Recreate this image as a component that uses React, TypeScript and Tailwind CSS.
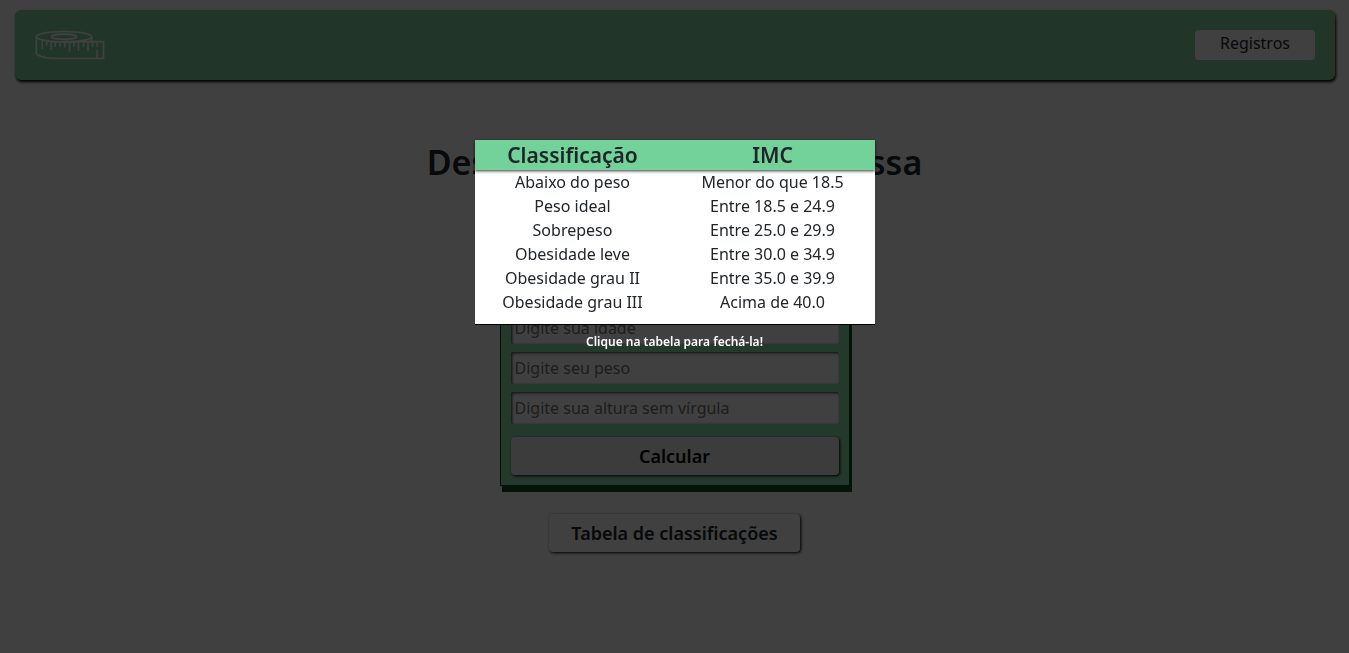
import { useState } from "react";

const rows = [
  ["Abaixo do peso", "Menor do que 18.5"],
  ["Peso ideal", "Entre 18.5 e 24.9"],
  ["Sobrepeso", "Entre 25.0 e 29.9"],
  ["Obesidade leve", "Entre 30.0 e 34.9"],
  ["Obesidade grau II", "Entre 35.0 e 39.9"],
  ["Obesidade grau III", "Acima de 40.0"],
];

const fields = [
  { id: "idade", placeholder: "Digite sua idade" },
  { id: "peso", placeholder: "Digite seu peso" },
  { id: "altura", placeholder: "Digite sua altura sem vírgula" },
];

function TapeLogo() {
  return (
    <svg
      className="h-[30px] w-[70px] text-white"
      viewBox="0 0 70 30"
      fill="none"
      stroke="currentColor"
      strokeWidth="1.7"
      strokeLinejoin="round"
      aria-hidden="true"
    >
      <ellipse cx="29" cy="6.7" rx="27.7" ry="5.2" />
      <ellipse cx="29" cy="6.7" rx="12.5" ry="2.6" />
      <path d="M1.3 6.7V23.5C4 27 14 28.5 24 28.5H68.5V11.7H29" />
      <path d="M56.7 6.7V11.7" />
      <path
        strokeWidth="1.5"
        d="M7.3 10.5V19M11.7 11V15.5M16 11.7V20M20.3 11.7V17M25 11.7V17M29.7 11.7V17.5M34.5 11.7V21.5M39 11.7V17M43.5 11.7V21M48.5 11.7V17M53 11.7V21M57.5 11.7V17M62 12.5V17M62 19.5V28"
      />
    </svg>
  );
}

function ClassificationTable({ onClose }: { onClose: () => void }) {
  return (
    <div
      role="dialog"
      aria-modal="true"
      aria-label="Tabela de classificações"
      className="fixed inset-0 flex flex-col items-center bg-black/75 pt-[140px]"
    >
      <div
        onClick={onClose}
        className="w-full max-w-[400px] cursor-pointer border-b border-black bg-white pb-[10px]"
      >
        <table className="w-full table-fixed border-collapse text-center text-base text-[#212529]">
          <thead className="bg-[#73d19a] text-[21px] shadow-[0_1px_3px_rgba(0,0,0,0.8)]">
            <tr className="h-[30px]">
              <th scope="col" className="p-0 pr-1 leading-[30px] font-semibold">
                Classificação
              </th>
              <th scope="col" className="p-0 pr-1 leading-[30px] font-semibold">
                IMC
              </th>
            </tr>
          </thead>
          <tbody>
            {rows.map(([name, range]) => (
              <tr key={name}>
                <td className="p-0 pr-1 leading-6">{name}</td>
                <td className="p-0 pr-1 leading-6">{range}</td>
              </tr>
            ))}
          </tbody>
        </table>
      </div>
      <p className="mt-2 text-xs leading-[18px] font-semibold text-white">
        Clique na tabela para fechá-la!
      </p>
    </div>
  );
}

export default function App() {
  const [open, setOpen] = useState(true);

  return (
    <div className="min-h-screen bg-white pt-[10px] font-['Noto_Sans',sans-serif] text-[#212529]">
      <header className="mr-[14px] ml-[15px] flex h-[70px] items-center justify-between rounded-md bg-[#84d8a4] px-5 shadow-[1px_2px_3px_#000]">
        <TapeLogo />
        <button type="button" className="h-[30px] w-[120px] rounded bg-white pb-1 text-base">
          Registros
        </button>
      </header>

      <main className="flex flex-col items-center">
        <h1 className="mt-[58px] text-center text-[34px] leading-[48px] font-semibold">
          Descubra seu índice de massa
        </h1>

        <form
          onSubmit={(e) => e.preventDefault()}
          className="mt-[115px] flex w-full max-w-[350px] flex-col gap-2 border border-[#084018] bg-[#8ce4ac] p-[10px] shadow-[2px_6px_0_#105020]"
        >
          {fields.map(({ id, placeholder }) => (
            <input
              key={id}
              id={id}
              aria-label={placeholder}
              placeholder={placeholder}
              className="h-8 w-full rounded-xs bg-white px-1 text-base shadow-[inset_1px_1px_3px_rgba(0,0,0,0.8)] placeholder:text-[#757575]"
            />
          ))}
          <button
            type="submit"
            className="mt-[5px] h-[38px] rounded bg-[#f0f0f0] text-lg font-semibold text-black shadow-[1px_1px_3px_#000]"
          >
            Calcular
          </button>
        </form>

        <button
          type="button"
          onClick={() => setOpen(true)}
          className="mt-7 h-[38px] rounded bg-white px-[22px] text-lg font-semibold shadow-[1px_1px_3px_#000]"
        >
          Tabela de classificações
        </button>
      </main>

      {open && <ClassificationTable onClose={() => setOpen(false)} />}
    </div>
  );
}
